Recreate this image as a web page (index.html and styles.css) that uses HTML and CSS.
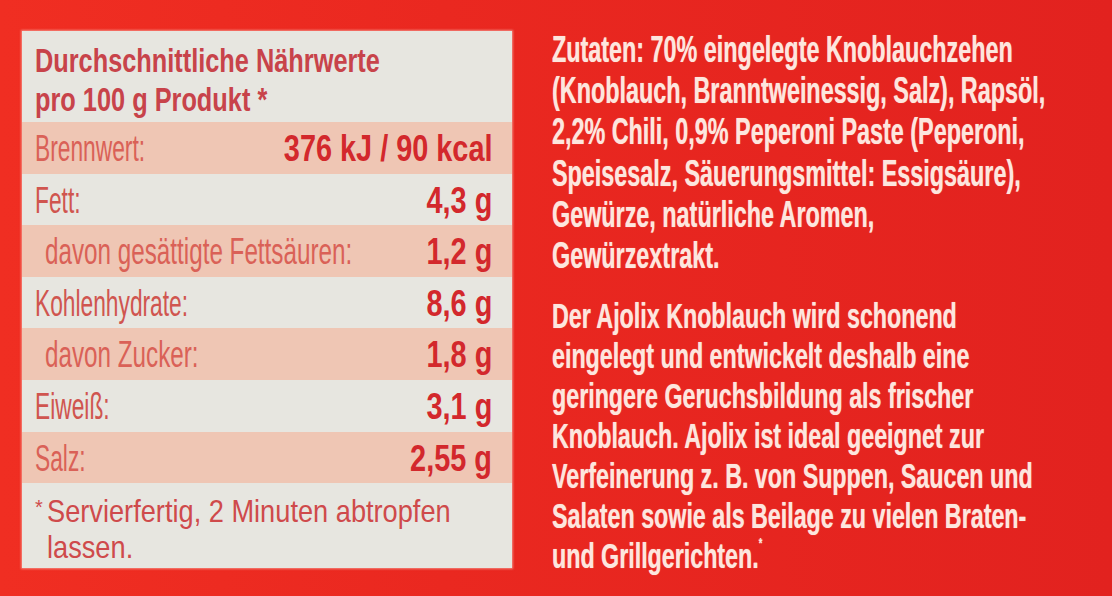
FILE: index.html
```html
<!DOCTYPE html>
<html lang="de">
<head>
<meta charset="utf-8">
<title>Ajolix – Nährwerte und Zutaten</title>
<link rel="stylesheet" href="styles.css">
</head>
<body>
<main class="label">
  <section class="nutrition">
    <h2 class="nutri-head"><span class="sx">Durchschnittliche Nährwerte<br>pro 100 g Produkt *</span></h2>
    <div class="rows">
      <div class="row alt"><span class="name"><span class="sx">Brennwert:</span></span><span class="val"><span class="sx">376 kJ / 90 kcal</span></span></div>
      <div class="row"><span class="name"><span class="sx">Fett:</span></span><span class="val"><span class="sx">4,3 g</span></span></div>
      <div class="row alt sub"><span class="name"><span class="sx">davon gesättigte Fettsäuren:</span></span><span class="val"><span class="sx">1,2 g</span></span></div>
      <div class="row"><span class="name"><span class="sx">Kohlenhydrate:</span></span><span class="val"><span class="sx">8,6 g</span></span></div>
      <div class="row alt sub"><span class="name"><span class="sx">davon Zucker:</span></span><span class="val"><span class="sx">1,8 g</span></span></div>
      <div class="row"><span class="name"><span class="sx">Eiweiß:</span></span><span class="val"><span class="sx">3,1 g</span></span></div>
      <div class="row alt"><span class="name"><span class="sx">Salz:</span></span><span class="val"><span class="sx">2,55 g</span></span></div>
    </div>
    <p class="foot"><span class="star">*</span><span class="sx">Servierfertig, 2 Minuten abtropfen<br>lassen.</span></p>
  </section>
  <section class="ingredients">
    <p class="para p1">Zutaten: 70% eingelegte Knoblauchzehen<br>(Knoblauch, Branntweinessig, Salz), Rapsöl,<br>2,2% Chili, 0,9% Peperoni Paste (Peperoni,<br>Speisesalz, Säuerungsmittel: Essigsäure),<br>Gewürze, natürliche Aromen,<br>Gewürzextrakt.</p>
    <p class="para p2">Der Ajolix Knoblauch wird schonend<br>eingelegt und entwickelt deshalb eine<br>geringere Geruchsbildung als frischer<br>Knoblauch. Ajolix ist ideal geeignet zur<br>Verfeinerung z. B. von Suppen, Saucen und<br>Salaten sowie als Beilage zu vielen Braten-<br>und Grillgerichten.<sup class="mark">*</sup></p>
  </section>
</main>
</body>
</html>
```
FILE: styles.css
```css
html, body {
  margin: 0;
  padding: 0;
  width: 1112px;
  height: 596px;
  overflow: hidden;
}

body {
  font-family: "Liberation Sans", Arial, sans-serif;
  background: #e4241d;
}

.label {
  display: flex;
  align-items: flex-start;
  width: 1112px;
  height: 596px;
  overflow: hidden;
  background: linear-gradient(90deg, #f02e22 0%, #ea2820 40%, #e2221f 100%);
}

.sx {
  display: inline-block;
  white-space: nowrap;
  transform-origin: left center;
}

/* ---------- nutrition table ---------- */
.nutrition {
  flex: none;
  margin: 31px 0 0 22px;
  width: 490px;
  height: 537px;
  background: #e7e6e0;
  box-shadow: 0 0 2px 1px rgba(250, 200, 190, 0.6);
  display: flex;
  flex-direction: column;
}

.nutri-head {
  margin: 0 0 3px 0;
  padding: 10px 0 0 13px;
  font-size: 34px;
  line-height: 39px;
  font-weight: 700;
  color: #c8434a;
}

.nutri-head .sx {
  transform: scaleX(0.745);
  transform-origin: left top;
}

.rows {
  display: flex;
  flex-direction: column;
}

.row {
  display: grid;
  grid-template-columns: minmax(0, 1fr) auto;
  height: 51.6px;
  line-height: 54px;
  font-size: 37px;
  padding: 0 20px 0 13px;
}

.row.alt {
  background: #efc6b4;
}

.row.sub {
  padding-left: 23px;
}

.name {
  min-width: 0;
  color: #d0554f;
  font-weight: 400;
}

.row.alt .name {
  color: #da6157;
}

.name .sx {
  transform: scaleX(0.615);
}

.row.sub .name .sx {
  transform: scaleX(0.655);
}

.val {
  text-align: right;
  color: #d3282c;
  font-weight: 700;
}

.val .sx {
  transform-origin: right center;
  transform: scaleX(0.78);
}

.foot {
  margin: 10px 0 0 0;
  padding-left: 13px;
  display: flex;
  align-items: flex-start;
  font-size: 32px;
  line-height: 36px;
  color: #cf4a4b;
}

.star {
  flex: none;
  font-size: 20px;
  line-height: 20px;
  width: 12px;
  margin-top: 4px;
}

.foot .sx {
  transform: scaleX(0.85);
  transform-origin: left top;
}

/* ---------- ingredients text ---------- */
.ingredients {
  flex: none;
  width: 520px;
  min-width: 0;
  margin-left: 40px;
  padding-top: 29px;
  display: flex;
  flex-direction: column;
}

.para {
  margin: 0;
  white-space: nowrap;
  color: #fde6de;
  font-weight: 700;
  text-shadow: 0 0 1px rgba(255, 225, 215, 0.7);
  transform-origin: left top;
}

.p1 {
  font-size: 36.5px;
  line-height: 41.2px;
  transform: scaleX(0.64);
}

.p2 {
  margin-top: 20px;
  font-size: 35.5px;
  line-height: 40px;
  transform: scaleX(0.655);
}

.mark {
  font-size: 14px;
  line-height: 0;
  vertical-align: 20px;
}
```
